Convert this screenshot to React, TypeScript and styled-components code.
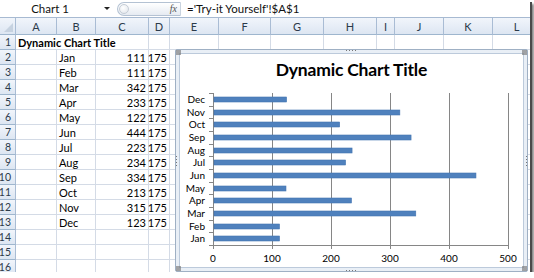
import React from 'react'
import styled, { createGlobalStyle } from 'styled-components'

const months = ['Jan', 'Feb', 'Mar', 'Apr', 'May', 'Jun', 'Jul', 'Aug', 'Sep', 'Oct', 'Nov', 'Dec']
const values = [111, 111, 342, 233, 122, 444, 223, 234, 334, 213, 315, 123]
const columns = ['A', 'B', 'C', 'D', 'E', 'F', 'G', 'H', 'I', 'J', 'K', 'L']

const GlobalStyle = createGlobalStyle`
  html, body {
    margin: 0;
    padding: 0;
    background: #ffffff;
  }
  body {
    font-family: Lato, 'Liberation Sans', sans-serif;
    color: #000;
  }
`

const Window = styled.div`
  position: relative;
  width: 530px;
  height: 272px;
  overflow: hidden;
  background: #fff;
  box-shadow: 2px 2px 0 #4a4a4a, 4px 4px 2px #888;
`

const FormulaBar = styled.div`
  display: flex;
  align-items: center;
  height: 18px;
  box-sizing: border-box;
  border-bottom: 1px solid #a7bad2;
  background: #fff;
  font-size: 11px;
`

const NameBox = styled.div`
  width: 100px;
  text-align: center;
  font-size: 11.5px;
  color: #111;
`

const DropArrow = styled.span`
  width: 0;
  height: 0;
  margin-left: 4px;
  border-left: 3px solid transparent;
  border-right: 3px solid transparent;
  border-top: 3px solid #222;
`

const Pill = styled.div`
  display: flex;
  align-items: center;
  justify-content: space-between;
  margin-left: 7px;
  width: 64px;
  height: 14px;
  box-sizing: border-box;
  padding: 0 3px 0 1px;
  border: 1px solid #b4c2d3;
  border-right: 1px solid #c9d3df;
  border-radius: 8px 0 0 8px;
  background: linear-gradient(#ffffff, #e6ebf2);
`

const Knob = styled.span`
  width: 10px;
  height: 10px;
  border-radius: 50%;
  box-sizing: border-box;
  border: 1px solid #c4ccd6;
  background: radial-gradient(circle at 40% 35%, #ffffff, #dfe4ea);
`

const Fx = styled.span`
  font-family: 'Liberation Serif', serif;
  font-style: italic;
  font-size: 10px;
  color: #555;
`

const FormulaText = styled.div`
  padding-left: 6px;
  font-size: 11.5px;
  color: #111;
  white-space: nowrap;
`

const Sheet = styled.div`
  display: grid;
  grid-template-columns: 16px 41px 39px 53px 21px 49px 52px 53px 53px 18px 49px 49px 48px;
  grid-template-rows: 17px;
  grid-auto-rows: 15px;
  font-size: 11px;
`

const HeaderCell = styled.div`
  box-sizing: border-box;
  display: flex;
  align-items: center;
  justify-content: center;
  background: linear-gradient(#f1f5fb, #dde6f2);
  border-right: 1px solid #a9bcd4;
  border-bottom: 1px solid #9eb6ce;
  color: #2b3a4a;
  font-size: 11px;
`

const CornerCell = styled(HeaderCell)`
  position: relative;
  &::after {
    content: '';
    position: absolute;
    right: 2px;
    bottom: 2px;
    width: 0;
    height: 0;
    border-left: 9px solid transparent;
    border-bottom: 9px solid #c6d2e0;
  }
`

const RowHeader = styled(HeaderCell)`
  justify-content: flex-end;
  padding-right: 4px;
  font-size: 10.5px;
`

const Cell = styled.div<{ $align?: 'left' | 'right'; $span?: number; $bold?: boolean }>`
  box-sizing: border-box;
  display: flex;
  align-items: center;
  justify-content: ${p => (p.$align === 'right' ? 'flex-end' : 'flex-start')};
  padding: 0 2px;
  border-right: 1px solid #d4dbe6;
  border-bottom: 1px solid #d4dbe6;
  grid-column: ${p => (p.$span ? `span ${p.$span}` : 'auto')};
  font-weight: ${p => (p.$bold ? 700 : 400)};
  white-space: nowrap;
  overflow: visible;
`

const ChartFrame = styled.div`
  position: absolute;
  left: 175px;
  top: 49px;
  width: 353px;
  height: 223px;
  box-sizing: border-box;
  padding: 3px;
  border: 1px solid #9fb0c4;
  border-radius: 2px;
  background: #e9eff6;
`

const ChartArea = styled.div`
  display: flex;
  flex-direction: column;
  height: 100%;
  box-sizing: border-box;
  border: 1px solid #bccadb;
  background: #fff;
`

const ChartTitle = styled.div`
  height: 28px;
  padding-top: 5px;
  box-sizing: border-box;
  text-align: center;
  font-weight: 700;
  font-size: 17.5px;
  line-height: 22px;
  letter-spacing: -0.2px;
`

const HandleDots = styled.span<{ $vertical?: boolean }>`
  position: absolute;
  width: ${p => (p.$vertical ? '1px' : '11px')};
  height: ${p => (p.$vertical ? '11px' : '1px')};
  background-image: ${p =>
    p.$vertical
      ? 'repeating-linear-gradient(to bottom, #777 0 1px, transparent 1px 3px)'
      : 'repeating-linear-gradient(to right, #777 0 1px, transparent 1px 3px)'};
`

const CornerDots = styled.span`
  position: absolute;
  width: 5px;
  height: 5px;
  background-image: radial-gradient(circle, #777 0.6px, transparent 0.9px);
  background-size: 2px 2px;
`

const BarChart: React.FC = () => {
  const x0 = 33
  const scale = 0.59
  const yTop = 11
  const yBot = 163
  const band = (yBot - yTop) / 12
  const ticks = [0, 100, 200, 300, 400, 500]

  return (
    <svg width="345" height="185" style={{ display: 'block' }}>
      {ticks.slice(1).map(t => (
        <line
          key={'g' + t}
          x1={x0 + t * scale + 0.5}
          x2={x0 + t * scale + 0.5}
          y1={yTop}
          y2={yBot + 4}
          stroke="#868686"
          shapeRendering="crispEdges"
        />
      ))}
      <line x1={x0 + 0.5} x2={x0 + 0.5} y1={yTop} y2={yBot + 4} stroke="#868686" shapeRendering="crispEdges" />
      <line x1={x0} x2={x0 + 500 * scale + 1} y1={yBot + 0.5} y2={yBot + 0.5} stroke="#868686" shapeRendering="crispEdges" />
      {Array.from({ length: 13 }).map((_, k) => (
        <line
          key={'t' + k}
          x1={x0 - 4}
          x2={x0}
          y1={Math.round(yBot - k * band) + 0.5}
          y2={Math.round(yBot - k * band) + 0.5}
          stroke="#868686"
          shapeRendering="crispEdges"
        />
      ))}
      {values.map((v, i) => {
        const cy = yBot - (i + 0.5) * band
        return (
          <g key={months[i]}>
            <rect
              x={x0 + 1}
              y={Math.round(cy - 2.5)}
              width={v * scale}
              height={5}
              fill="#4f81bd"
              stroke="#4475b1"
              strokeWidth={0.6}
            />
            <text x={25} y={cy + 3.5} textAnchor="end" fontSize="10" fontFamily="Lato, 'Liberation Sans', sans-serif">
              {months[i]}
            </text>
          </g>
        )
      })}
      {ticks.map(t => (
        <text
          key={'l' + t}
          x={x0 + t * scale}
          y={180}
          textAnchor="middle"
          fontSize="10"
          fontFamily="Lato, 'Liberation Sans', sans-serif"
        >
          {t}
        </text>
      ))}
    </svg>
  )
}

const App: React.FC = () => {
  return (
    <Window>
      <GlobalStyle />
      <FormulaBar>
        <NameBox>Chart 1</NameBox>
        <DropArrow />
        <Pill>
          <Knob />
          <Fx>fx</Fx>
        </Pill>
        <FormulaText>='Try-it Yourself'!$A$1</FormulaText>
      </FormulaBar>
      <Sheet>
        <CornerCell />
        {columns.map(c => (
          <HeaderCell key={c}>{c}</HeaderCell>
        ))}
        {Array.from({ length: 16 }).map((_, r) => {
          const row = r + 1
          if (row === 1) {
            return (
              <React.Fragment key={row}>
                <RowHeader>1</RowHeader>
                <Cell $span={3} $bold>Dynamic Chart Title</Cell>
                {columns.slice(3).map(c => (
                  <Cell key={c} />
                ))}
              </React.Fragment>
            )
          }
          const m = row - 2
          const has = m >= 0 && m < 12
          return (
            <React.Fragment key={row}>
              <RowHeader>{row}</RowHeader>
              <Cell />
              <Cell>{has ? months[m] : ''}</Cell>
              <Cell $align="right">{has ? values[m] : ''}</Cell>
              <Cell $align="right">{has ? 175 : ''}</Cell>
              {columns.slice(4).map(c => (
                <Cell key={c} />
              ))}
            </React.Fragment>
          )
        })}
      </Sheet>
      <ChartFrame>
        <ChartArea>
          <ChartTitle>Dynamic Chart Title</ChartTitle>
          <BarChart />
        </ChartArea>
        <HandleDots style={{ left: 170, top: 0 }} />
        <HandleDots style={{ left: 170, bottom: 0 }} />
        <HandleDots $vertical style={{ left: 0, top: 106 }} />
        <HandleDots $vertical style={{ right: 0, top: 106 }} />
        <CornerDots style={{ left: 0, top: 0 }} />
        <CornerDots style={{ right: 0, top: 0 }} />
        <CornerDots style={{ left: 0, bottom: 0 }} />
        <CornerDots style={{ right: 0, bottom: 0 }} />
      </ChartFrame>
    </Window>
  )
}

export default App
